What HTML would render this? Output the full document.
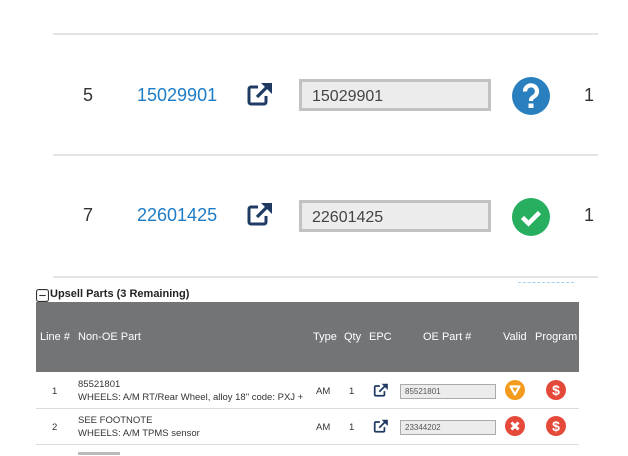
<!DOCTYPE html>
<html><head><meta charset="utf-8"><style>
*{margin:0;padding:0;box-sizing:border-box}
body{width:628px;height:456px;overflow:hidden;background:#fff;font-family:"Liberation Sans",Arial,sans-serif;position:relative;color:#333}
.a{position:absolute}
.hl{position:absolute;left:53px;width:545px;height:2px;background:#e4e4e4}
.num{font-size:18px;color:#333}
.lnk{font-size:18px;color:#1d7cc6}
.inp{position:absolute;left:299px;width:192px;height:32px;background:#ececec;border:3px solid #c2c2c2;font-size:16px;color:#444;padding:6px 0 0 10px}
.th{position:absolute;top:331px;color:#fff;font-size:11px}
.td{position:absolute;font-size:9.5px;color:#333}
.sinp{position:absolute;left:400px;width:96px;height:15px;background:#ececec;border:1px solid #aaa;font-size:8px;color:#555;padding:2px 0 0 4px}
.rl{position:absolute;left:36px;width:543px;height:1px;background:#ddd}
</style></head><body>
<div class="hl" style="top:33px"></div>
<div class="hl" style="top:154px"></div>
<div class="hl" style="top:276px"></div>

<div class="a num" style="left:83px;top:85px">5</div>
<div class="a lnk" style="left:137px;top:85px">15029901</div>
<svg class="a" style="left:246px;top:82px" width="28" height="24" viewBox="0 0 28 24"><path d="M12 5H5a2 2 0 0 0-2 2v13a2 2 0 0 0 2 2h13a2 2 0 0 0 2-2v-6" fill="none" stroke="#1f3a63" stroke-width="3"/><path d="M11 15L21 5" stroke="#1f3a63" stroke-width="3.2"/><path d="M15 1h11v11z" fill="#1f3a63"/></svg>
<div class="inp" style="top:79px">15029901</div>
<svg class="a" style="left:512px;top:77px" width="38" height="38" viewBox="0 0 38 38"><circle cx="19" cy="19" r="19" fill="#2a7fbe"/><path d="M13 14.5a6 6 0 1 1 9 5c-2 1.3-3 2-3 4.5" fill="none" stroke="#fff" stroke-width="4.2"/><rect x="16.5" y="26.5" width="5" height="4.5" fill="#fff"/></svg>
<div class="a num" style="left:584px;top:85px">1</div>

<div class="a num" style="left:83px;top:205px">7</div>
<div class="a lnk" style="left:137px;top:205px">22601425</div>
<svg class="a" style="left:246px;top:202px" width="28" height="24" viewBox="0 0 28 24"><path d="M12 5H5a2 2 0 0 0-2 2v13a2 2 0 0 0 2 2h13a2 2 0 0 0 2-2v-6" fill="none" stroke="#1f3a63" stroke-width="3"/><path d="M11 15L21 5" stroke="#1f3a63" stroke-width="3.2"/><path d="M15 1h11v11z" fill="#1f3a63"/></svg>
<div class="inp" style="top:200px">22601425</div>
<svg class="a" style="left:512px;top:198px" width="38" height="38" viewBox="0 0 38 38"><circle cx="19" cy="19" r="19" fill="#27ae5f"/><path d="M10.5 19.5l6 6 11-11" fill="none" stroke="#fff" stroke-width="4.5"/></svg>
<div class="a num" style="left:584px;top:205px">1</div>

<div class="a" style="left:518px;top:282px;width:56px;height:1px;border-top:1px dashed #69b3e7;opacity:.6"></div>

<svg class="a" style="left:36px;top:289px" width="13" height="13" viewBox="0 0 12 12"><rect x="0.5" y="0.5" width="11" height="11" rx="2" fill="none" stroke="#333"/><path d="M3 6h6" stroke="#333"/></svg>
<div class="a" style="left:50px;top:288px;font-size:11px;font-weight:bold;color:#222">Upsell Parts (3 Remaining)</div>

<div class="a" style="left:36px;top:302px;width:543px;height:70px;background:#737476"></div>
<div class="th" style="left:40px">Line #</div>
<div class="th" style="left:78px">Non-OE Part</div>
<div class="th" style="left:313px">Type</div>
<div class="th" style="left:344px">Qty</div>
<div class="th" style="left:369px">EPC</div>
<div class="th" style="left:423px">OE Part #</div>
<div class="th" style="left:503px">Valid</div>
<div class="th" style="left:535px">Program</div>

<div class="td" style="left:52px;top:386px">1</div>
<div class="td" style="left:78px;top:379px">85521801</div>
<div class="td" style="left:78px;top:392px">WHEELS: A/M RT/Rear Wheel, alloy 18" code: PXJ +</div>
<div class="td" style="left:316px;top:386px">AM</div>
<div class="td" style="left:349px;top:386px">1</div>
<svg class="a" style="left:373px;top:383px" width="16" height="14" viewBox="0 0 28 24"><path d="M12 5H5a2 2 0 0 0-2 2v13a2 2 0 0 0 2 2h13a2 2 0 0 0 2-2v-6" fill="none" stroke="#1f3a63" stroke-width="3"/><path d="M11 15L21 5" stroke="#1f3a63" stroke-width="3.2"/><path d="M15 1h11v11z" fill="#1f3a63"/></svg>
<div class="sinp" style="top:384px">85521801</div>
<svg class="a" style="left:505px;top:380px" width="20" height="20" viewBox="0 0 20 20"><circle cx="10" cy="10" r="10" fill="#f29b1d"/><path d="M5.5 6.5h9L10 14.5z" fill="none" stroke="#fff" stroke-width="2.2" stroke-linejoin="round"/></svg>
<svg class="a" style="left:546px;top:380px" width="20" height="20" viewBox="0 0 20 20"><circle cx="10" cy="10" r="10" fill="#e5493a"/><text x="10" y="15" font-size="14" font-weight="bold" fill="#fff" text-anchor="middle" font-family="Liberation Sans">$</text></svg>
<div class="rl" style="top:408px"></div>

<div class="td" style="left:52px;top:422px">2</div>
<div class="td" style="left:78px;top:415px">SEE FOOTNOTE</div>
<div class="td" style="left:78px;top:428px">WHEELS: A/M TPMS sensor</div>
<div class="td" style="left:316px;top:422px">AM</div>
<div class="td" style="left:349px;top:422px">1</div>
<svg class="a" style="left:373px;top:419px" width="16" height="14" viewBox="0 0 28 24"><path d="M12 5H5a2 2 0 0 0-2 2v13a2 2 0 0 0 2 2h13a2 2 0 0 0 2-2v-6" fill="none" stroke="#1f3a63" stroke-width="3"/><path d="M11 15L21 5" stroke="#1f3a63" stroke-width="3.2"/><path d="M15 1h11v11z" fill="#1f3a63"/></svg>
<div class="sinp" style="top:420px">23344202</div>
<svg class="a" style="left:505px;top:416px" width="20" height="20" viewBox="0 0 20 20"><circle cx="10" cy="10" r="10" fill="#e5493a"/><path d="M6.5 6.5l7 7M13.5 6.5l-7 7" stroke="#fff" stroke-width="3"/></svg>
<svg class="a" style="left:546px;top:416px" width="20" height="20" viewBox="0 0 20 20"><circle cx="10" cy="10" r="10" fill="#e5493a"/><text x="10" y="15" font-size="14" font-weight="bold" fill="#fff" text-anchor="middle" font-family="Liberation Sans">$</text></svg>
<div class="rl" style="top:444px"></div>
<div class="a" style="left:78px;top:452px;width:42px;height:3px;background:#bbb"></div>
</body></html>
